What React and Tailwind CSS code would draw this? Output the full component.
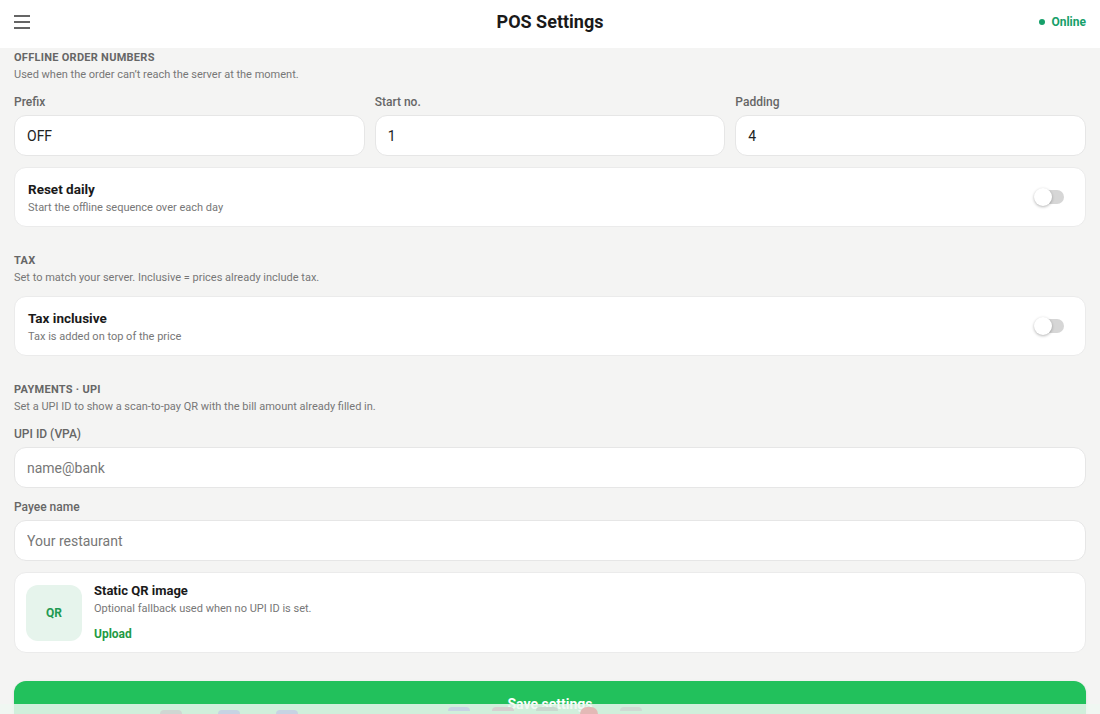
import React from 'react';

const Section = ({ title, sub, children }) => (
  <div>
    <div className="text-[11px] font-bold tracking-[0.025em] text-[#666] uppercase leading-4">{title}</div>
    <div className="text-[11px] text-[#777] leading-4 mt-[1px]">{sub}</div>
    {children}
  </div>
);

const Field = ({ label, value, placeholder }) => (
  <div className="flex flex-col">
    <label className="text-[12px] font-medium text-[#666] leading-4 mb-[5px]">{label}</label>
    <input
      className="h-[41px] w-full rounded-xl bg-white border border-[#e6e6e6] px-3 text-[14px] text-[#222] placeholder-[#777] outline-none"
      defaultValue={value}
      placeholder={placeholder}
    />
  </div>
);

const Toggle = () => (
  <div className="relative w-[30px] h-[20px] flex items-center">
    <div className="absolute left-[4px] w-[26px] h-[14px] rounded-full bg-[#d6d6d6]" />
    <div className="absolute left-0 w-[18px] h-[18px] rounded-full bg-white shadow-[0_1px_3px_rgba(0,0,0,0.3)]" />
  </div>
);

const ToggleCard = ({ title, sub }) => (
  <div className="h-[60px] rounded-xl bg-white border border-[#ebebeb] flex items-center justify-between pl-[13px] pr-[21px]">
    <div>
      <div className="text-[13.5px] font-bold text-[#1a1a1a] leading-5">{title}</div>
      <div className="text-[11px] text-[#777] leading-4 mt-[1px]">{sub}</div>
    </div>
    <Toggle />
  </div>
);

export default function App() {
  return (
    <div className="h-[714px] overflow-hidden bg-[#f4f4f3] font-['Roboto',sans-serif] relative">
      <header className="h-[48px] bg-white flex items-center justify-between px-[14px] pb-[4px]">
        <svg width="16" height="14" viewBox="0 0 16 14">
          <path d="M0 1h16M0 7h16M0 13h16" stroke="#333" strokeWidth="1.6" />
        </svg>
        <h1 className="absolute left-1/2 -translate-x-1/2 top-[8px] text-[18px] font-bold text-[#1a1a1a]">POS Settings</h1>
        <div className="flex items-center gap-[6px] text-[12px] font-bold text-[#16a06a]">
          <span className="w-[6px] h-[6px] rounded-full bg-[#16a06a]" />
          Online
        </div>
      </header>

      <main className="px-[14px] pt-[2px] flex flex-col">
        <Section title="Offline order numbers" sub="Used when the order can’t reach the server at the moment.">
          <div className="grid grid-cols-3 gap-[10px] mt-[11px]">
            <Field label="Prefix" value="OFF" />
            <Field label="Start no." value="1" />
            <Field label="Padding" value="4" />
          </div>
          <div className="mt-[11px]">
            <ToggleCard title="Reset daily" sub="Start the offline sequence over each day" />
          </div>
        </Section>

        <div className="mt-[26px]">
          <Section title="Tax" sub="Set to match your server. Inclusive = prices already include tax.">
            <div className="mt-[10px]">
              <ToggleCard title="Tax inclusive" sub="Tax is added on top of the price" />
            </div>
          </Section>
        </div>

        <div className="mt-[26px]">
          <Section title="Payments · UPI" sub="Set a UPI ID to show a scan-to-pay QR with the bill amount already filled in.">
            <div className="mt-[11px] flex flex-col gap-[11px]">
              <Field label="UPI ID (VPA)" placeholder="name@bank" />
              <Field label="Payee name" placeholder="Your restaurant" />
            </div>
            <div className="mt-[11px] h-[81px] rounded-xl bg-white border border-[#ebebeb] flex items-center px-[11px] gap-[12px]">
              <div className="w-[56px] h-[56px] rounded-xl bg-[#e6f4ec] flex items-center justify-center text-[12px] font-bold text-[#1f9a52]">QR</div>
              <div className="flex flex-col">
                <div className="text-[13px] font-bold text-[#1a1a1a] leading-4">Static QR image</div>
                <div className="text-[11px] text-[#777] leading-4 mt-[2px]">Optional fallback used when no UPI ID is set.</div>
                <button className="text-left text-[12px] font-bold text-[#1f9a45] mt-[9px] leading-4">Upload</button>
              </div>
            </div>
          </Section>
        </div>

        <button className="mt-[28px] h-[46px] rounded-xl bg-[#22c15c] text-white text-[14px] font-bold shadow-sm">
          Save settings
        </button>
      </main>

      <div className="absolute left-0 right-0 bottom-0 h-[10px] bg-[#eef7f1]/85 flex items-end">
        <div className="flex gap-[36px] ml-[160px]">
          <span className="w-[22px] h-[4px] rounded-t bg-[#cfd6d2]" />
          <span className="w-[22px] h-[4px] rounded-t bg-[#c7d3e3]" />
          <span className="w-[22px] h-[4px] rounded-t bg-[#c7d3e3]" />
        </div>
        <div className="flex gap-[22px] ml-[150px]">
          <span className="w-[22px] h-[4px] rounded-t bg-[#c7d3e3]" />
          <span className="w-[22px] h-[4px] rounded-t bg-[#d6d0d0]" />
          <span className="w-[22px] h-[4px] rounded-t bg-[#c9d9cf]" />
          <span className="w-[18px] h-[7px] rounded-t-full bg-[#e3b9b6]" />
          <span className="w-[22px] h-[4px] rounded-t bg-[#cfdad3]" />
        </div>
      </div>
    </div>
  );
}
